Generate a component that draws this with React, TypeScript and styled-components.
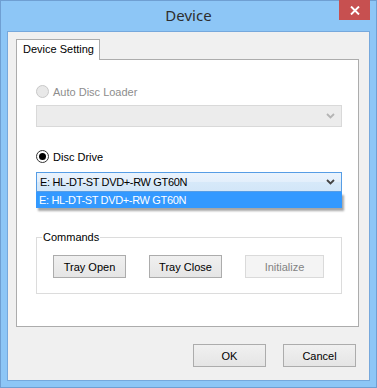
import React from "react";
import styled, { createGlobalStyle } from "styled-components";

const Global = createGlobalStyle`
  html, body { margin: 0; padding: 0; background: #8cc5f5; }
  body { font-family: "Liberation Sans", Arial, sans-serif; font-size: 11px; color: #000; }
`;

const Window = styled.div`
  box-sizing: border-box;
  width: 377px;
  height: 388px;
  background: #8dc6f6;
  border: 1px solid #6f9fd2;
  display: flex;
  flex-direction: column;
  padding: 0 6px 6px 6px;
`;

const TitleBar = styled.div`
  height: 30px;
  display: grid;
  grid-template-columns: 1fr auto 1fr;
  align-items: start;
`;

const Title = styled.div`
  grid-column: 2;
  font-family: "Noto Sans", "Open Sans", sans-serif;
  font-size: 15px;
  line-height: 30px;
  color: #2e2e2e;
  margin-top: -1px;
`;

const CloseButton = styled.div`
  grid-column: 3;
  justify-self: end;
  width: 31px;
  height: 20px;
  margin-top: -1px;
  background: #c75050;
  display: flex;
  align-items: center;
  justify-content: center;
`;

const Client = styled.div`
  flex: 1;
  background: #f0f0f0;
  border: 1px solid #76a8dc;
  display: flex;
  flex-direction: column;
  padding: 7px 0 0 8px;
`;

const TabHeader = styled.div`
  box-sizing: border-box;
  width: 84px;
  height: 21px;
  background: #fff;
  border: 1px solid #acacac;
  border-bottom: none;
  padding: 3px 0 0 6px;
  color: #000;
  position: relative;
  z-index: 1;
  margin-bottom: -1px;
`;

const Panel = styled.div`
  box-sizing: border-box;
  width: 343px;
  height: 268px;
  background: #fff;
  border: 1px solid #acacac;
  padding: 25px 16px 0 19px;
  display: flex;
  flex-direction: column;
`;

const RadioRow = styled.label<{ $disabled?: boolean }>`
  display: flex;
  align-items: center;
  height: 13px;
  gap: 4px;
  color: ${(p) => (p.$disabled ? "#8d8d8d" : "#000")};
`;

const RadioCircle = styled.span<{ $checked?: boolean; $disabled?: boolean }>`
  box-sizing: border-box;
  width: 13px;
  height: 13px;
  border-radius: 50%;
  border: 1px solid ${(p) => (p.$disabled ? "#c8c8c8" : "#333")};
  background: ${(p) => (p.$disabled ? "#e8e8e8" : "#fff")};
  display: flex;
  align-items: center;
  justify-content: center;
  &::after {
    content: "";
    display: ${(p) => (p.$checked ? "block" : "none")};
    width: 7px;
    height: 7px;
    border-radius: 50%;
    background: #000;
  }
`;

const Combo = styled.div<{ $disabled?: boolean }>`
  box-sizing: border-box;
  position: relative;
  height: ${(p) => (p.$disabled ? "22px" : "20px")};
  border: 1px solid ${(p) => (p.$disabled ? "#d9d9d9" : "#569de5")};
  background: ${(p) =>
    p.$disabled ? "#ececec" : "linear-gradient(#eaf3fd 0%, #e3effb 50%, #d7e9f9 51%, #d2e6f8 100%)"};
  display: flex;
  align-items: center;
  padding: 0 6px 0 3px;
  color: #000;
`;

const ComboText = styled.span`
  flex: 1;
  letter-spacing: -0.35px;
`;

const Chevron = styled.svg`
  margin-left: auto;
`;

const DropList = styled.div`
  position: absolute;
  left: -1px;
  right: -1px;
  top: 19px;
  height: 16px;
  background: #3399ff;
  color: #fff;
  display: flex;
  align-items: center;
  padding-left: 3px;
  box-shadow: 2px 3px 2px rgba(0, 0, 0, 0.35);
  letter-spacing: -0.35px;
`;

const GroupBox = styled.fieldset`
  margin: 0;
  margin-top: 39px;
  border: 1px solid #dcdcdc;
  padding: 12px 0 15px 16px;
  display: flex;
  gap: 23px;
`;

const Legend = styled.legend`
  padding: 0 1px;
  margin-left: -11px;
  color: #000;
`;

const Button = styled.button<{ $wide?: boolean }>`
  box-sizing: border-box;
  width: ${(p) => (p.$wide ? "79px" : "73px")};
  height: 23px;
  font-family: "Liberation Sans", Arial, sans-serif;
  font-size: 11px;
  color: #000;
  background: linear-gradient(#f0f0f0, #e5e5e5);
  border: 1px solid #acacac;
  border-radius: 0;
  padding: 0;
  &:disabled {
    background: #f4f4f4;
    border-color: #dadada;
    color: #838383;
  }
`;

const Footer = styled.div`
  display: flex;
  justify-content: flex-end;
  gap: 17px;
  padding: 17px 13px 0 0;
`;

const ChevronIcon = ({ color }: { color: string }) => (
  <Chevron width="9" height="6" viewBox="0 0 9 6">
    <path d="M1 1 L4.5 4.5 L8 1" fill="none" stroke={color} strokeWidth="1.8" />
  </Chevron>
);

export default function App() {
  return (
    <>
      <Global />
      <Window>
        <TitleBar>
          <Title>Device</Title>
          <CloseButton>
            <svg width="10" height="9" viewBox="0 0 10 9">
              <path d="M1 0.5 L9 8.5 M9 0.5 L1 8.5" stroke="#fff" strokeWidth="1.9" />
            </svg>
          </CloseButton>
        </TitleBar>
        <Client>
          <TabHeader>Device Setting</TabHeader>
          <Panel>
            <RadioRow $disabled>
              <RadioCircle $disabled />
              Auto Disc Loader
            </RadioRow>
            <Combo $disabled style={{ marginTop: 7 }}>
              <ChevronIcon color="#b4b4b4" />
            </Combo>
            <RadioRow style={{ marginTop: 23 }}>
              <RadioCircle $checked />
              Disc Drive
            </RadioRow>
            <Combo style={{ marginTop: 9 }}>
              <ComboText>E: HL-DT-ST DVD+-RW GT60N</ComboText>
              <ChevronIcon color="#444" />
              <DropList>E: HL-DT-ST DVD+-RW GT60N</DropList>
            </Combo>
            <GroupBox>
              <Legend>Commands</Legend>
              <Button>Tray Open</Button>
              <Button>Tray Close</Button>
              <Button $wide disabled>
                Initialize
              </Button>
            </GroupBox>
          </Panel>
          <Footer>
            <Button>OK</Button>
            <Button>Cancel</Button>
          </Footer>
        </Client>
      </Window>
    </>
  );
}
